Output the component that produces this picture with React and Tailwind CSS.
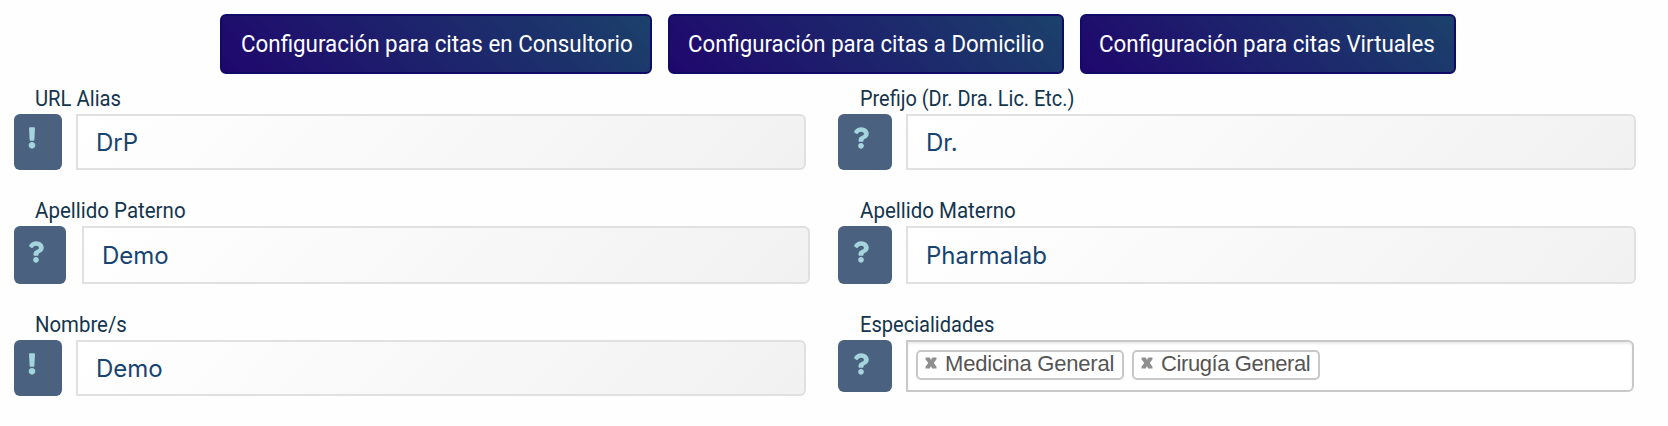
import { FaExclamation, FaQuestion } from "react-icons/fa";

const label = "inline-block origin-left font-['Roboto','Noto_Sans',sans-serif] text-[22px] leading-[26px] text-[#14354d] whitespace-nowrap";
const input =
  "min-w-0 rounded-r-md border-2 border-[#e0e0e0] bg-linear-[135deg,#ffffff,#f1f1f1] pl-[18px] pt-px font-['Inter',sans-serif] text-[24px] text-[#174470] flex items-center";
const badge = "shrink-0 rounded-md bg-[#4a6180] text-[#a5d5dc]";

function ConfigButton({ className, spacing, children }) {
  return (
    <button
      className={`h-[60px] rounded-md border-2 border-[#100b69] bg-linear-[45deg,#1f076d,#1b416b] pb-px text-left font-['Roboto','Noto_Sans',sans-serif] text-[24px] text-white whitespace-nowrap ${className}`}
    >
      <span className={`inline-block origin-left ${spacing}`}>{children}</span>
    </button>
  );
}

function Field({ title, spacing, gap, kind, badgeSize, inputSize, value, children }) {
  return (
    <div className="flex flex-col">
      <div className={`flex items-end pb-[2px] ${gap}`}>
        <span className={`${label} ${spacing}`}>{title}</span>
      </div>
      <div className="flex">
        <div className={`${badge} ${badgeSize}`}>
          {kind === "warn" ? (
            <FaExclamation className="h-[22px] w-[8px]" />
          ) : (
            <FaQuestion className="h-[22px] w-[16px]" />
          )}
        </div>
        {children || (
          <div className={`${input} ${inputSize}`}>
            <span>{value}</span>
          </div>
        )}
      </div>
    </div>
  );
}

function Tag({ className, spacing, children }) {
  return (
    <li className={`flex h-[30px] rounded-[5px] border-2 border-[#c8c8c8] pl-[7px] ${className}`}>
      <svg className="mt-[5px] h-[12px] w-[12px] shrink-0" viewBox="0 0 12 12">
        <path
          d="M0.5 0.5H4.8L6 3L7.2 0.5H11.5V2.3L8.8 6L11.5 9.7V11.5H7.2L6 9L4.8 11.5H0.5V9.7L3.2 6L0.5 2.3Z"
          fill="#8f8f8f"
        />
      </svg>
      <span className={`ml-2 text-[22px] leading-[24px] whitespace-nowrap ${spacing}`}>{children}</span>
    </li>
  );
}

export default function App() {
  return (
    <main className="h-[426px] w-[1668px] overflow-hidden bg-[#fefefe] pt-[14px]">
      <nav className="flex gap-4 pl-[220px]">
        <ConfigButton className="w-[432px] pl-[19px]" spacing="scale-x-[0.932]">Configuración para citas en Consultorio</ConfigButton>
        <ConfigButton className="w-[396px] pl-[18px]" spacing="scale-x-[0.926]">Configuración para citas a Domicilio</ConfigButton>
        <ConfigButton className="w-[376px] pl-[17px]" spacing="scale-x-[0.932]">Configuración para citas Virtuales</ConfigButton>
      </nav>
      <form className="grid grid-cols-[824px_798px] pl-[14px]">
        <Field title="URL Alias" spacing="scale-x-[0.92]" gap="h-10 pl-[21px]" kind="warn" value="DrP"
          badgeSize="h-14 w-12 pt-[13px] pl-[14px]" inputSize="ml-[14px] h-14 w-[730px]" />
        <Field title="Prefijo (Dr. Dra. Lic. Etc.)" spacing="scale-x-[0.905]" gap="h-10 pl-[22px]" kind="help" value="Dr."
          badgeSize="h-14 w-[54px] pt-[13px] pl-[15px]" inputSize="ml-[14px] h-14 w-[730px]" />
        <Field title="Apellido Paterno" spacing="scale-x-[0.932]" gap="h-14 pl-[21px]" kind="help" value="Demo"
          badgeSize="h-[58px] w-[52px] pt-[15px] pl-[14px]" inputSize="ml-4 h-[58px] w-[728px]" />
        <Field title="Apellido Materno" spacing="scale-x-[0.932]" gap="h-14 pl-[22px]" kind="help" value="Pharmalab"
          badgeSize="h-[58px] w-[54px] pt-[15px] pl-[15px]" inputSize="ml-[14px] h-[58px] w-[730px]" />
        <Field title="Nombre/s" spacing="scale-x-[0.925]" gap="h-14 pl-[21px]" kind="warn" value="Demo"
          badgeSize="h-14 w-12 pt-[13px] pl-[14px]" inputSize="ml-[14px] h-14 w-[730px]" />
        <Field title="Especialidades" spacing="scale-x-[0.912]" gap="h-14 pl-[22px]" kind="help"
          badgeSize="h-[52px] w-[54px] pt-[13px] pl-[15px]">
          <ul className="ml-[14px] flex h-[52px] w-[728px] gap-2 rounded-r-md border-2 border-[#c8c8c8] bg-white pt-2 pl-2 font-['Liberation_Sans',Arial,sans-serif] text-[#555555] shadow-[inset_0_2px_2px_rgba(0,0,0,0.075)]">
            <Tag className="w-[208px]" spacing="tracking-[-0.2px]">Medicina General</Tag>
            <Tag className="w-[188px]" spacing="tracking-[-0.4px]">Cirugía General</Tag>
          </ul>
        </Field>
      </form>
    </main>
  );
}
